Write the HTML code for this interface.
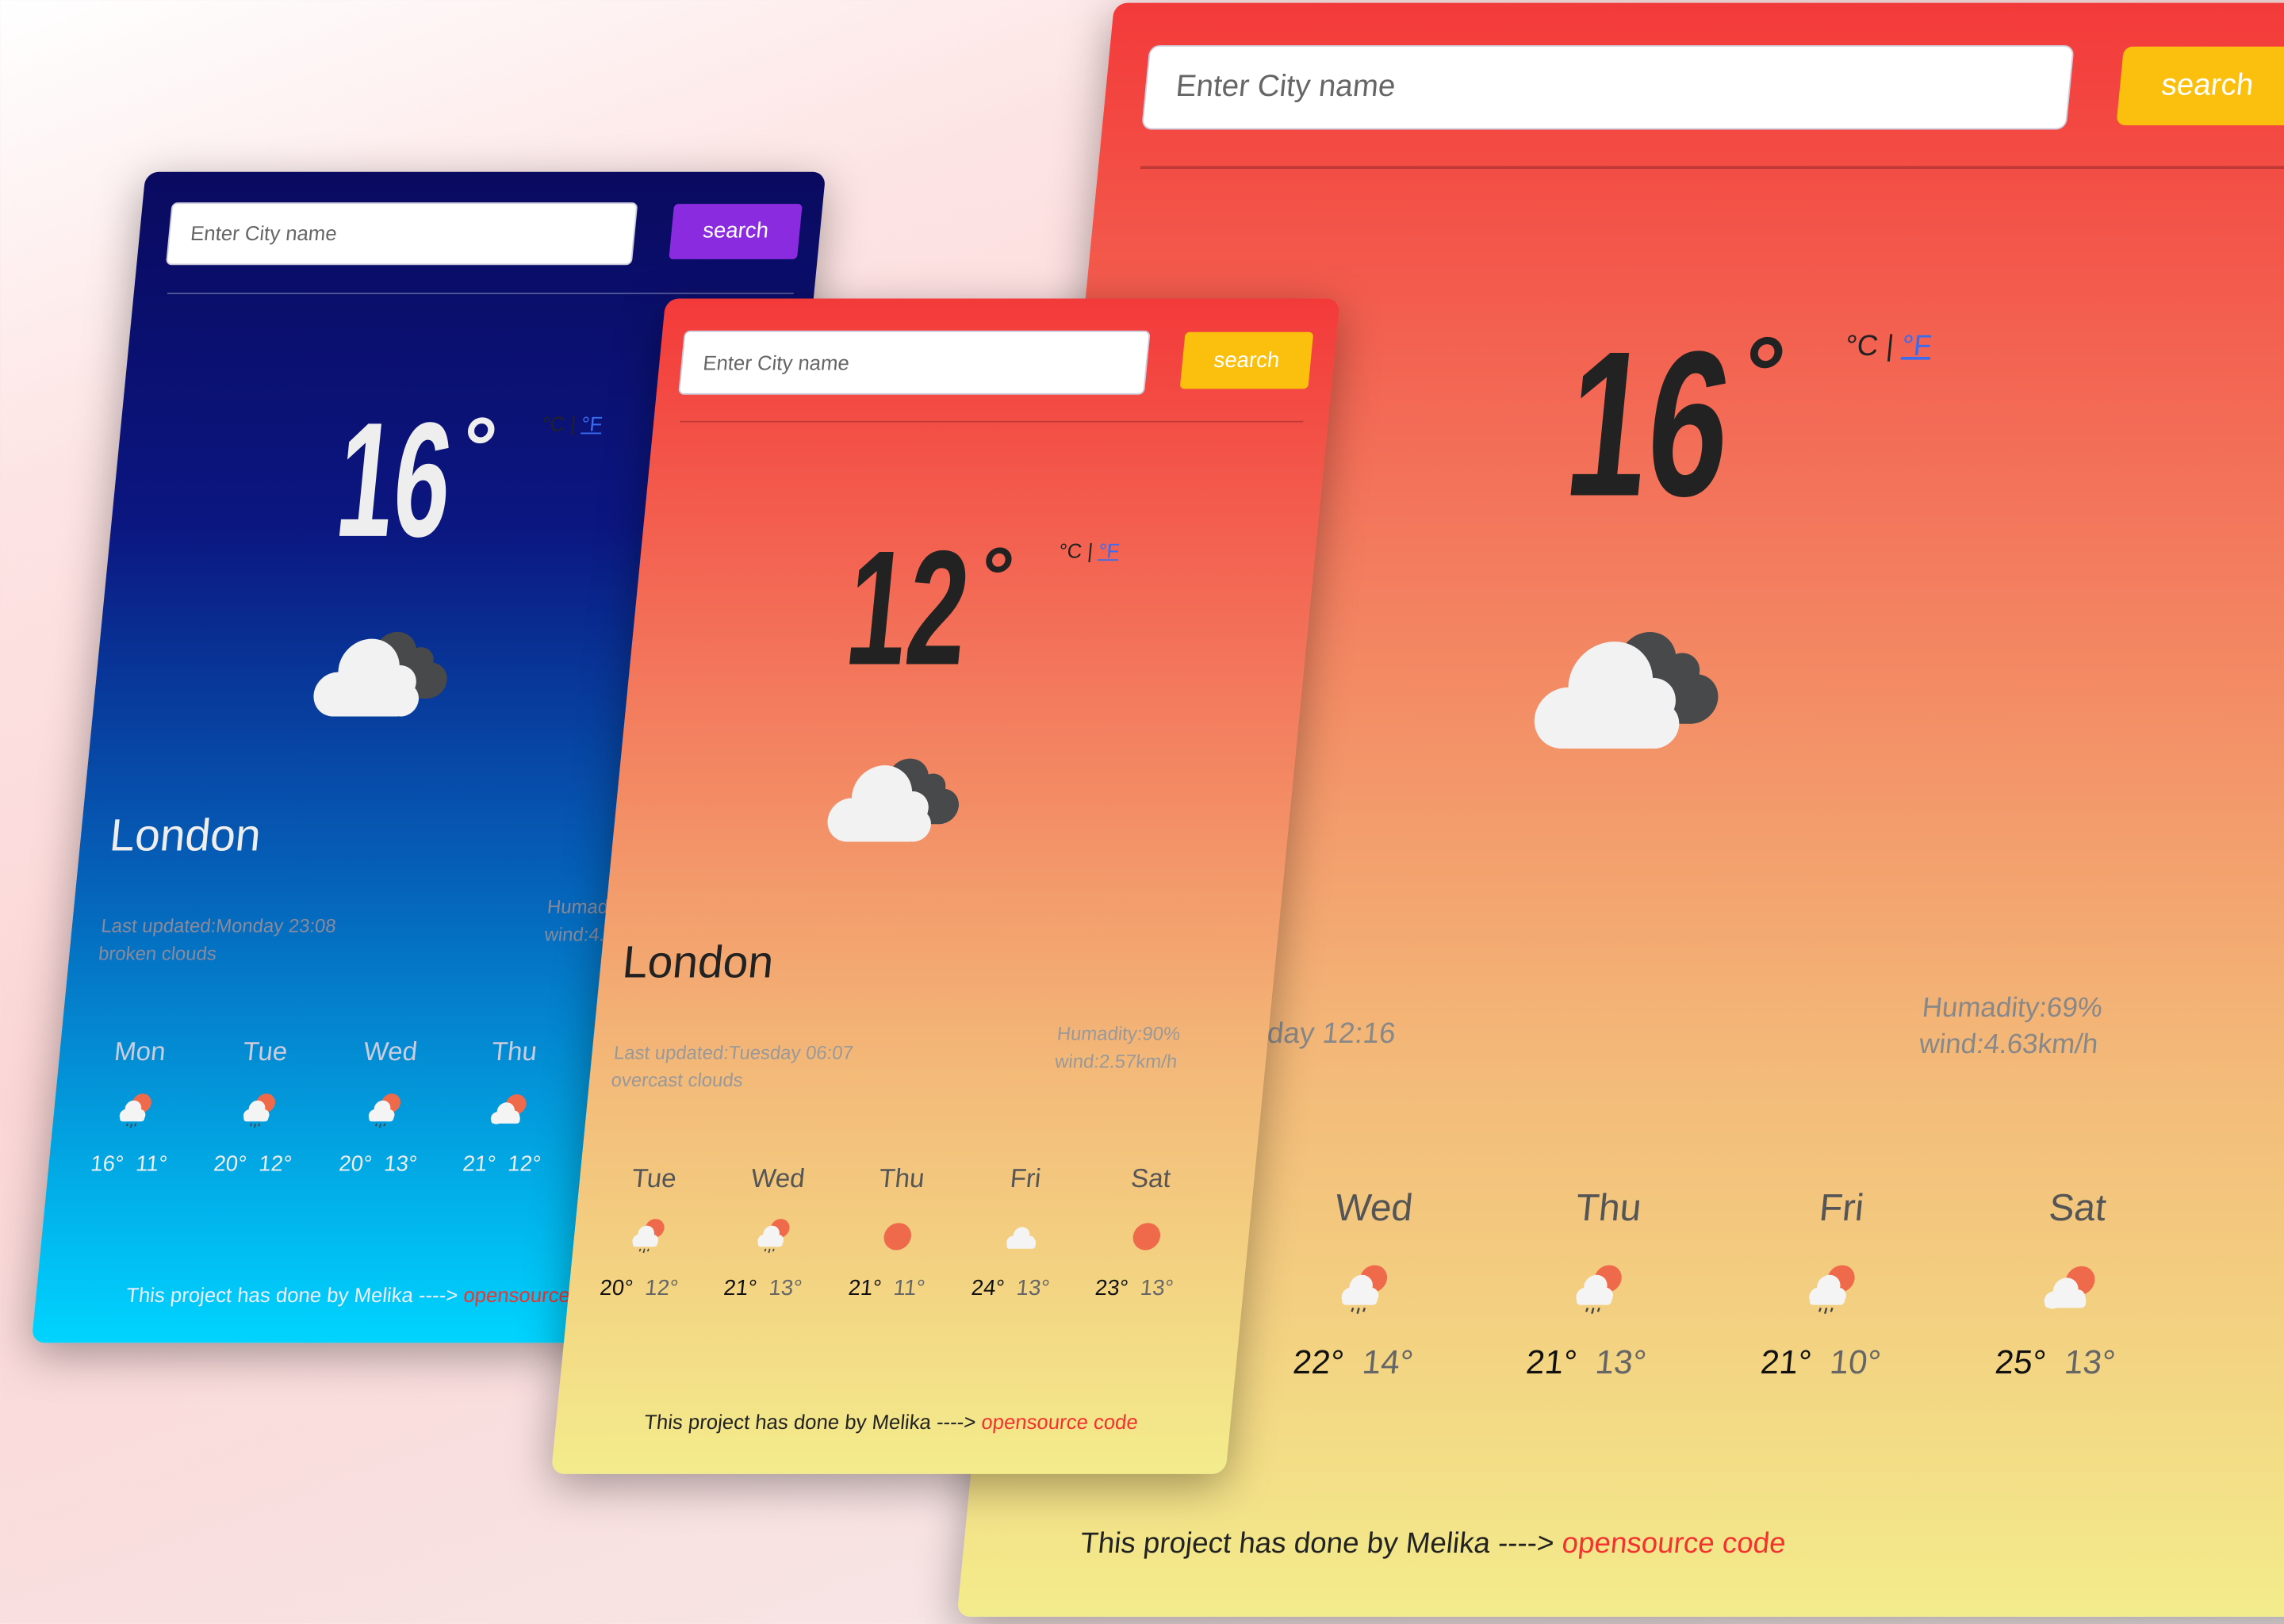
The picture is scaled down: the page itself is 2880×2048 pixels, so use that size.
<!DOCTYPE html>
<html><head><meta charset="utf-8">
<style>
html,body{margin:0;padding:0;width:2880px;height:2048px;overflow:hidden}
body{background:linear-gradient(160deg,#fff 0%,#fde4e4 20%,#fbd6d6 45%,#f6eded 100%)}
#w{position:absolute;left:0;top:0;width:1568px;height:1115px;transform:scale(1.8367);transform-origin:0 0;font-family:"Liberation Sans Narrow","Liberation Sans",sans-serif}
.card{position:absolute;transform:skewX(-5.57deg);transform-origin:0 0;border-radius:9px;overflow:hidden;box-shadow:0 8px 30px rgba(0,0,0,.35)}
.card *{position:absolute;white-space:nowrap;margin:0}
.warm{background:linear-gradient(180deg,#f33a3a 0%,#f3735a 30%,#f3b878 65%,#f3ec8c 100%)}
.blue{background:linear-gradient(180deg,#0a0a60 0%,#0b1680 30%,#0560b8 60%,#00d4ff 100%)}
.inp{background:#fff;border-radius:3px;color:#666;box-shadow:0 0 0 1px #ccd}
.btn{border-radius:3px;color:#fff;text-align:center}
.day{color:#555;transform:translateX(-50%)}
.t{transform:translateX(-50%)}
.t b{color:#111;font-weight:normal}.t i{color:#666;font-style:normal}
.ic{transform:translateX(-50%)}
.ft{color:#222}.ft span{position:static;color:#f2332f}
.cf{color:#222}.cf u{position:static;color:#3a6cf0}
.n{transform-origin:0 0;font-weight:bold}
</style></head><body>
<svg width="0" height="0" style="position:absolute">
<defs>
<symbol id="cl" viewBox="0 0 100 64">
<g fill="#48494b"><circle cx="56" cy="18" r="15"/><circle cx="74" cy="24" r="10"/><circle cx="82" cy="38" r="13"/><rect x="56" y="20" width="26" height="31"/></g>
<g fill="#f2f2f2"><circle cx="38" cy="30" r="22"/><circle cx="16" cy="48" r="16"/><circle cx="60" cy="40" r="13"/><circle cx="64" cy="52" r="12"/><rect x="16" y="40" width="48" height="24" rx="3"/></g>
</symbol>
<symbol id="rn" viewBox="0 0 30 30">
<circle cx="19" cy="9" r="7" fill="#ee6a4a"/>
<g fill="#f4f4f4"><circle cx="13" cy="13" r="6"/><circle cx="8" cy="18" r="4.5"/><circle cx="18" cy="18" r="4.5"/><rect x="4" y="16" width="18" height="6.5" rx="2"/></g>
<g stroke="#444" stroke-width="1"><line x1="10" y1="24" x2="9.5" y2="26"/><line x1="13" y1="24" x2="12.5" y2="27"/><line x1="16" y1="24" x2="15.5" y2="26"/></g>
</symbol>
<symbol id="sc" viewBox="0 0 30 30">
<circle cx="20" cy="10" r="7.5" fill="#ee6a4a"/>
<g fill="#f4f4f4"><circle cx="13" cy="15" r="6.5"/><circle cx="7" cy="20" r="4.5"/><circle cx="19" cy="19" r="4.5"/><rect x="3" y="18" width="21" height="6" rx="2"/></g>
</symbol>
<symbol id="sn" viewBox="0 0 30 30"><circle cx="15" cy="15" r="10" fill="#ee6a4a"/></symbol>
<symbol id="wc" viewBox="0 0 30 30"><g fill="#f4f4f4"><circle cx="15" cy="14" r="6"/><circle cx="9" cy="19" r="4.5"/><circle cx="21" cy="19" r="4.5"/><rect x="5" y="17" width="21" height="7" rx="2"/></g></symbol>
</defs></svg>
<div id="w">

<!-- BIG CARD -->
<div class="card warm" style="left:765px;top:2px;width:1000px;height:1108px">
 <div class="inp" style="left:28px;top:30px;width:633px;height:56px;border-radius:6px;font-size:21px;line-height:56px;text-indent:20px">Enter City name</div>
 <div class="btn" style="left:696px;top:30px;width:180px;height:54px;background:#fbbf0e;border-radius:6px;font-size:21px;line-height:54px;text-indent:-60px">search</div>
 <div style="left:29px;top:112px;width:1000px;height:2px;background:rgba(150,40,40,.55)"></div>
 <div class="n" style="left:340px;top:219px;font-size:142px;line-height:1;color:#222;transform:scaleX(.7)">16</div>
 <div style="left:457px;top:219px;font-size:70px;line-height:1;color:#222;font-weight:bold">°</div>
 <div class="cf" style="left:525px;top:226px;font-size:20px;line-height:1">°C | <u>°F</u></div>
 <svg style="left:336px;top:428px" width="132" height="84"><use href="#cl"/></svg>
 <div style="left:-10px;top:697px;width:272px;text-align:right;font-size:20px;color:#888">Last updated:Tuesday 12:16</div>
 <div style="left:622px;top:678px;font-size:19px;line-height:25px;color:#888;text-align:center">Humadity:69%<br>wind:4.63km/h</div>
 <div class="day" style="left:98px;top:812px;font-size:26px">Tue</div>
 <div class="day" style="left:259px;top:812px;font-size:26px">Wed</div>
 <div class="day" style="left:420px;top:812px;font-size:26px">Thu</div>
 <div class="day" style="left:580px;top:812px;font-size:26px">Fri</div>
 <div class="day" style="left:742px;top:812px;font-size:26px">Sat</div>
 <svg class="ic" style="left:258px;top:864px" width="40" height="40"><use href="#rn"/></svg>
 <svg class="ic" style="left:419px;top:864px" width="40" height="40"><use href="#rn"/></svg>
 <svg class="ic" style="left:579px;top:864px" width="40" height="40"><use href="#rn"/></svg>
 <svg class="ic" style="left:742px;top:864px" width="40" height="40"><use href="#sc"/></svg>
 <div class="t" style="left:255px;top:920px;font-size:23px"><b style="position:static">22°</b>&nbsp; <i style="position:static">14°</i></div>
 <div class="t" style="left:415px;top:920px;font-size:23px"><b style="position:static">21°</b>&nbsp; <i style="position:static">13°</i></div>
 <div class="t" style="left:576px;top:920px;font-size:23px"><b style="position:static">21°</b>&nbsp; <i style="position:static">10°</i></div>
 <div class="t" style="left:737px;top:920px;font-size:23px"><b style="position:static">25°</b>&nbsp; <i style="position:static">13°</i></div>
 <div class="ft t" style="left:322px;top:1047px;font-size:20px">This project has done by Melika ----&gt; <span>opensource code</span></div>
</div>

<!-- BLUE CARD -->
<div class="card blue" style="left:100px;top:118px;width:467px;height:804px">
 <div class="inp" style="left:21px;top:22px;width:318px;height:41px;font-size:14px;line-height:41px;text-indent:14px">Enter City name</div>
 <div class="btn" style="left:365px;top:22px;width:88px;height:38px;background:#8b2be0;font-size:15px;line-height:38px">search</div>
 <div style="left:23px;top:83px;width:430px;height:1px;background:rgba(255,255,255,.3)"></div>
 <div class="n" style="left:153px;top:156px;font-size:112px;line-height:1;color:#eee;transform:scaleX(.62)">16</div>
 <div style="left:236px;top:161px;font-size:58px;line-height:1;color:#eee;font-weight:bold">°</div>
 <div class="cf" style="left:289px;top:166px;font-size:14px;line-height:1">°C | <u>°F</u></div>
 <svg style="left:150px;top:313px" width="96" height="61"><use href="#cl"/></svg>
 <div style="left:20px;top:438px;font-size:31px;color:#eee">London</div>
 <div style="left:20px;top:508px;font-size:13px;line-height:19px;color:#8a8a9a">Last updated:Monday 23:08<br>broken clouds</div>
 <div style="left:325px;top:495px;font-size:13px;line-height:19px;color:#8a8a9a">Humadity:<br>wind:4.</div>
 <div class="day" style="left:55px;top:594px;font-size:18px;color:#ccd">Mon</div>
 <div class="day" style="left:141px;top:594px;font-size:18px;color:#ccd">Tue</div>
 <div class="day" style="left:227px;top:594px;font-size:18px;color:#ccd">Wed</div>
 <div class="day" style="left:312px;top:594px;font-size:18px;color:#ccd">Thu</div>
 <svg class="ic" style="left:56px;top:631px" width="28" height="28"><use href="#rn"/></svg>
 <svg class="ic" style="left:141px;top:631px" width="28" height="28"><use href="#rn"/></svg>
 <svg class="ic" style="left:227px;top:631px" width="28" height="28"><use href="#rn"/></svg>
 <svg class="ic" style="left:312px;top:631px" width="28" height="28"><use href="#sc"/></svg>
 <div class="t" style="left:55px;top:673px;font-size:15px;color:#eee">16° &nbsp;11°</div>
 <div class="t" style="left:140px;top:673px;font-size:15px;color:#eee">20° &nbsp;12°</div>
 <div class="t" style="left:226px;top:673px;font-size:15px;color:#eee">20° &nbsp;13°</div>
 <div class="t" style="left:311px;top:673px;font-size:15px;color:#eee">21° &nbsp;12°</div>
 <div class="ft" style="left:62px;top:763px;font-size:14px;color:#eef">This project has done by Melika ----&gt; <span>opensource code</span></div>
</div>

<!-- ORANGE CARD -->
<div class="card warm" style="left:457px;top:205px;width:463px;height:807px">
 <div class="inp" style="left:16px;top:23px;width:318px;height:42px;font-size:14px;line-height:42px;text-indent:14px">Enter City name</div>
 <div class="btn" style="left:359px;top:23px;width:88px;height:39px;background:#fbbf0e;font-size:15px;line-height:39px">search</div>
 <div style="left:18px;top:84px;width:428px;height:1px;background:rgba(150,40,40,.5)"></div>
 <div class="n" style="left:146px;top:157px;font-size:112px;line-height:1;color:#222;transform:scaleX(.66)">12</div>
 <div style="left:235px;top:163px;font-size:56px;line-height:1;color:#222;font-weight:bold">°</div>
 <div class="cf" style="left:287px;top:166px;font-size:14px;line-height:1">°C | <u>°F</u></div>
 <svg style="left:146px;top:313px" width="94" height="60"><use href="#cl"/></svg>
 <div style="left:15px;top:438px;font-size:31px;color:#222">London</div>
 <div style="left:15px;top:508px;font-size:13px;line-height:19px;color:#999">Last updated:Tuesday 06:07<br>overcast clouds</div>
 <div style="left:318px;top:495px;font-size:13px;line-height:19px;color:#999;text-align:center">Humadity:90%<br>wind:2.57km/h</div>
 <div class="day" style="left:51px;top:594px;font-size:18px">Tue</div>
 <div class="day" style="left:136px;top:594px;font-size:18px">Wed</div>
 <div class="day" style="left:221px;top:594px;font-size:18px">Thu</div>
 <div class="day" style="left:306px;top:594px;font-size:18px">Fri</div>
 <div class="day" style="left:392px;top:594px;font-size:18px">Sat</div>
 <svg class="ic" style="left:51px;top:630px" width="28" height="28"><use href="#rn"/></svg>
 <svg class="ic" style="left:137px;top:630px" width="28" height="28"><use href="#rn"/></svg>
 <svg class="ic" style="left:222px;top:630px" width="28" height="28"><use href="#sn"/></svg>
 <svg class="ic" style="left:307px;top:630px" width="28" height="28"><use href="#wc"/></svg>
 <svg class="ic" style="left:393px;top:630px" width="28" height="28"><use href="#sn"/></svg>
 <div class="t" style="left:48px;top:671px;font-size:15px"><b style="position:static">20°</b> &nbsp;<i style="position:static">12°</i></div>
 <div class="t" style="left:133px;top:671px;font-size:15px"><b style="position:static">21°</b> &nbsp;<i style="position:static">13°</i></div>
 <div class="t" style="left:218px;top:671px;font-size:15px"><b style="position:static">21°</b> &nbsp;<i style="position:static">11°</i></div>
 <div class="t" style="left:303px;top:671px;font-size:15px"><b style="position:static">24°</b> &nbsp;<i style="position:static">13°</i></div>
 <div class="t" style="left:388px;top:671px;font-size:15px"><b style="position:static">23°</b> &nbsp;<i style="position:static">13°</i></div>
 <div class="ft t" style="left:230px;top:763px;font-size:14px">This project has done by Melika ----&gt; <span>opensource code</span></div>
</div>

</div>
</body></html>
